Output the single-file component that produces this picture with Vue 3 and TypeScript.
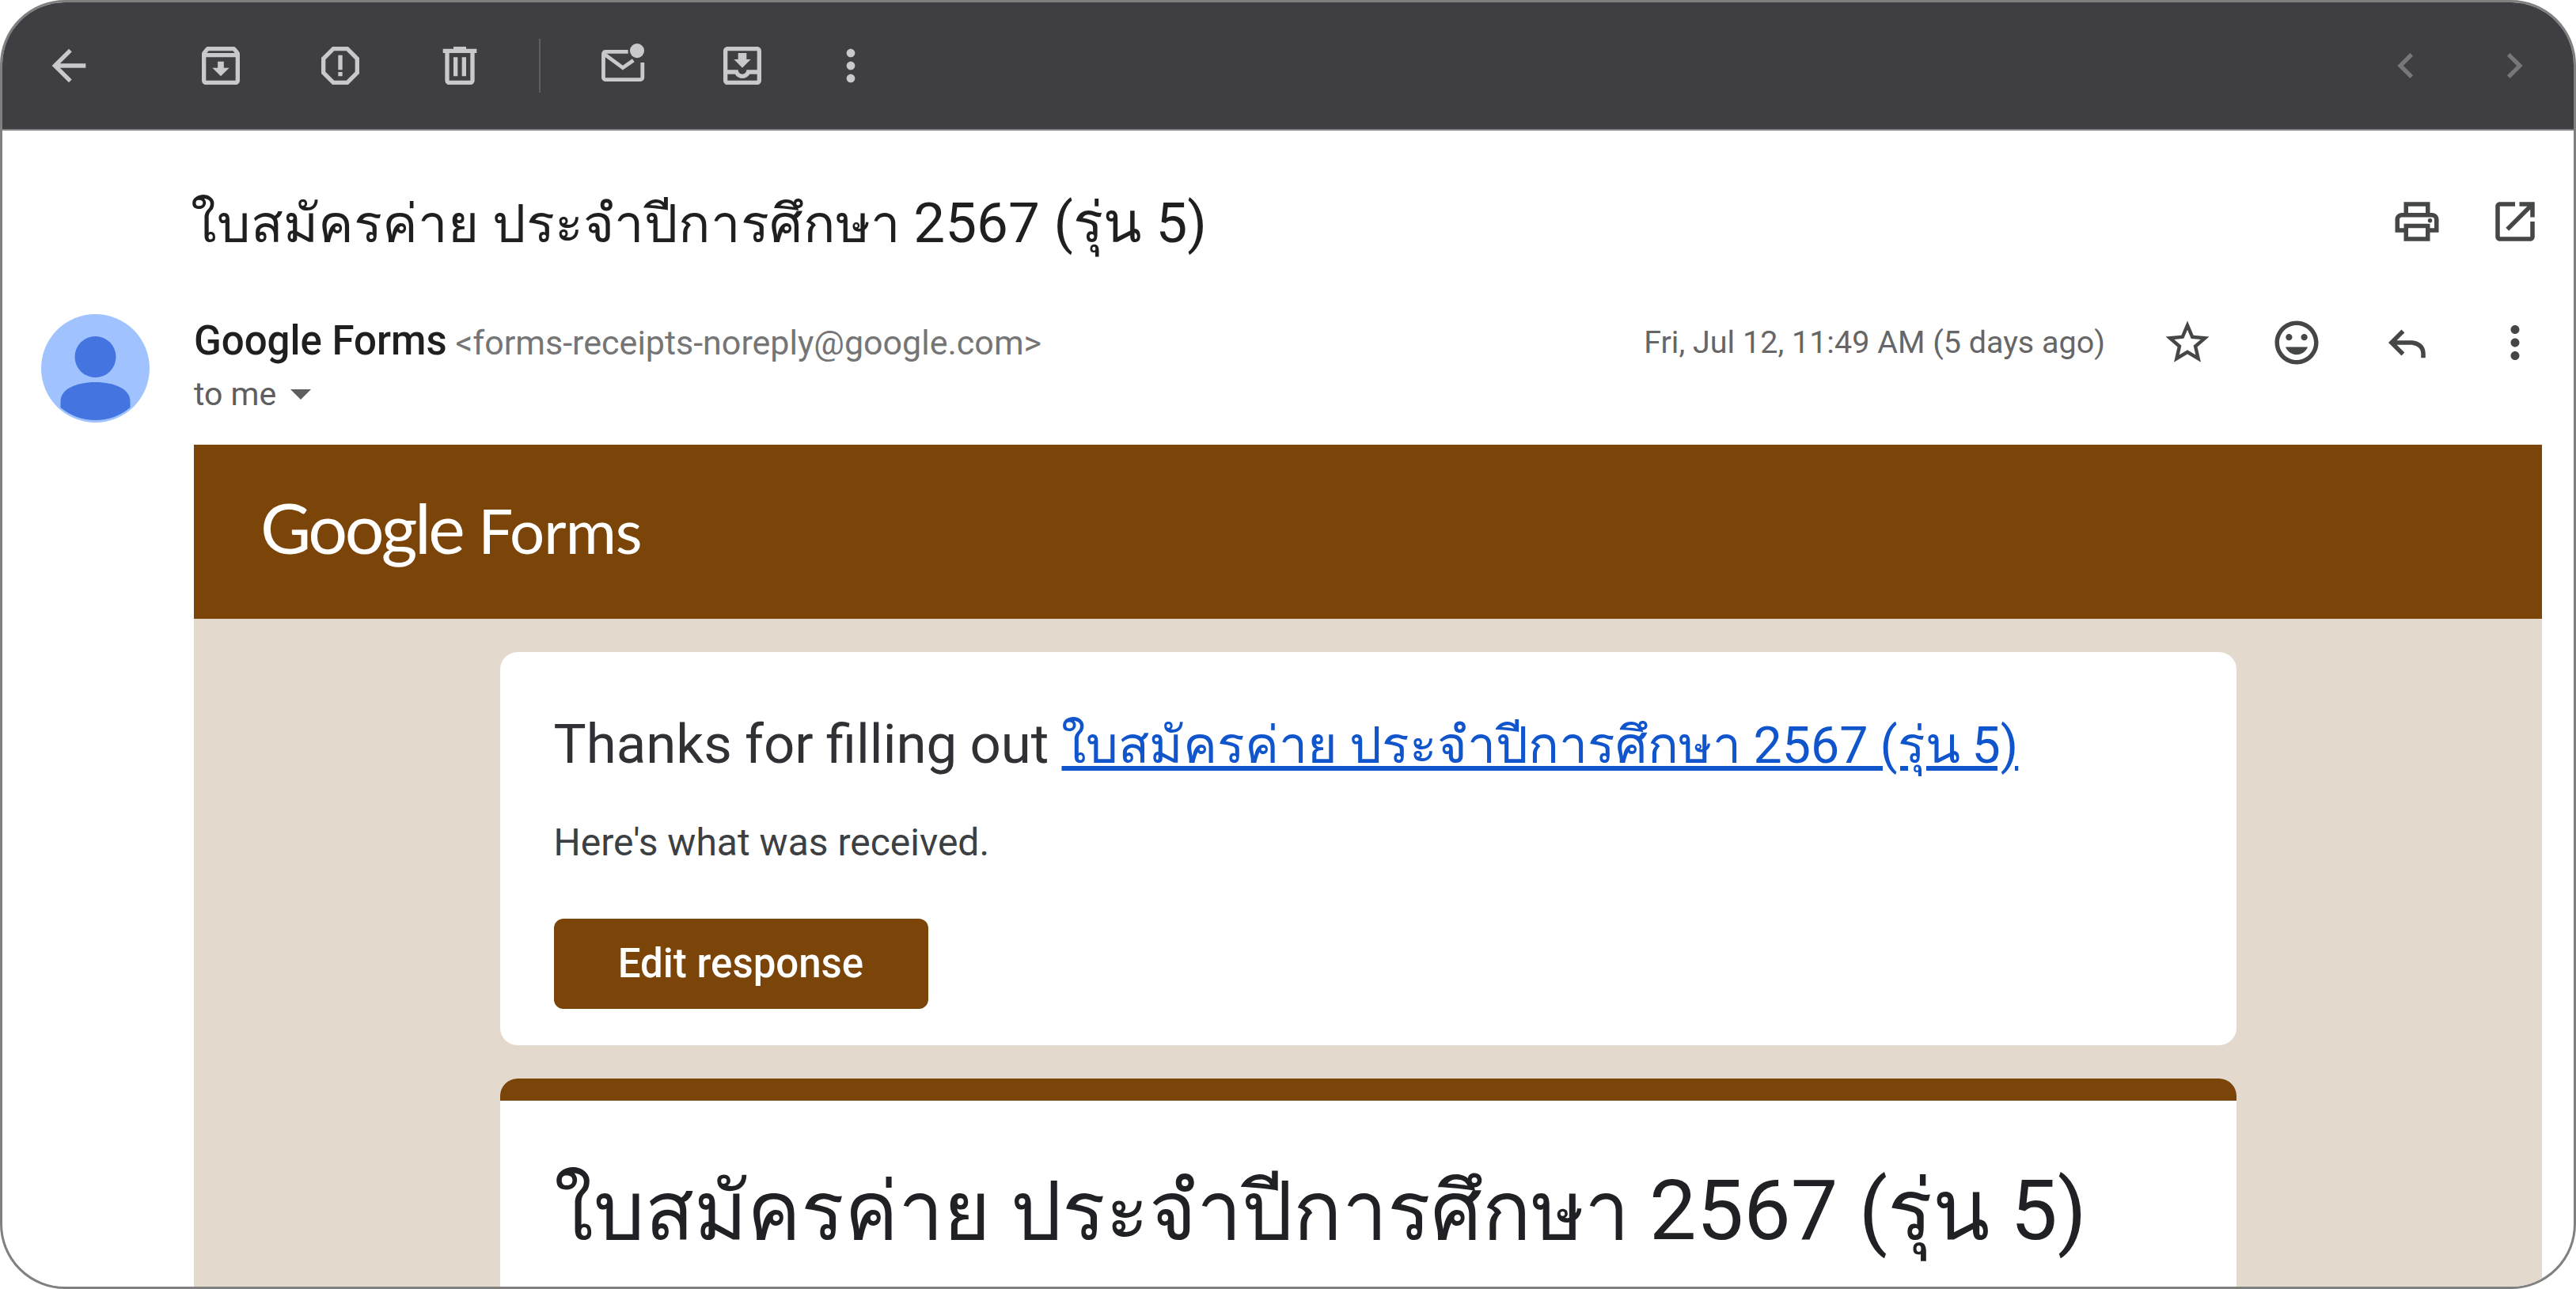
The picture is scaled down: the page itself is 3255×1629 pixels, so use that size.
<script setup lang="ts">
interface Icon { name: string; d: string }
const titleThai: string = 'ใบสมัครค่าย ประจำปีการศึกษา'
const titleNum: string = '2567 (รุ่น 5)'
const more = 'M12 8c1.1 0 2-.9 2-2s-.9-2-2-2-2 .9-2 2 .9 2 2 2zm0 2c-1.1 0-2 .9-2 2s.9 2 2 2 2-.9 2-2-.9-2-2-2zm0 6c-1.1 0-2 .9-2 2s.9 2 2 2 2-.9 2-2-.9-2-2-2z'
const group1: Icon[] = [
  { name: 'archive', d: 'M20.54 5.23l-1.39-1.68C18.88 3.21 18.47 3 18 3H6c-.47 0-.88.21-1.16.55L3.46 5.23C3.17 5.57 3 6.02 3 6.5V19c0 1.1.9 2 2 2h14c1.1 0 2-.9 2-2V6.5c0-.48-.17-.93-.46-1.27zM6.24 5h11.52l.83 1H5.42l.82-1zM5 19V8h14v11H5zm8.45-9h-2.9v3H8l4 4 4-4h-2.55z' },
  { name: 'report', d: 'M15.73 3H8.27L3 8.27v7.46L8.27 21h7.46L21 15.73V8.27L15.73 3zM19 14.9L14.9 19H9.1L5 14.9V9.1L9.1 5h5.8L19 9.1v5.8zM11 7h2v7h-2zM11 15h2v2h-2z' },
  { name: 'delete', d: 'M15 4V3H9v1H4v2h1v13c0 1.1.9 2 2 2h10c1.1 0 2-.9 2-2V6h1V4h-5zm2 15H7V6h10v13zM9 8h2v9H9zm4 0h2v9h-2z' },
]
const inbox = 'M19 3H5c-1.1 0-2 .9-2 2v14c0 1.1.9 2 2 2h14c1.1 0 2-.9 2-2V5c0-1.1-.9-2-2-2zm0 16H5v-3h3.56c.69 1.19 1.97 2 3.45 2s2.75-.81 3.45-2H19v3zm0-5h-4.99c0 1.1-.9 2-2 2s-2-.9-2-2H5V5h14v9zm-3-5h-2V6h-4v3H8l4 4 4-4z'
const prev = 'M15.41 7.41L14 6l-6 6 6 6 1.41-1.41L10.83 12z'
const next = 'M10 6L8.59 7.41 13.17 12l-4.58 4.59L10 18l6-6z'
const print = 'M19 8h-1V3H6v5H5c-1.66 0-3 1.34-3 3v6h4v4h12v-4h4v-6c0-1.66-1.34-3-3-3zM8 5h8v3H8V5zm8 12v2H8v-4h8v2zm2-2v-2H6v2H4v-4c0-.55.45-1 1-1h14c.55 0 1 .45 1 1v4h-2zM18 10.5a1 1 0 1 0 0 2 1 1 0 0 0 0-2z'
const openNew = 'M19 19H5V5h7V3H5c-1.11 0-2 .9-2 2v14c0 1.1.89 2 2 2h14c1.1 0 2-.9 2-2v-7h-2v7zM14 3v2h3.59l-9.83 9.83 1.41 1.41L19 6.41V10h2V3h-7z'
const star = 'M22 9.24l-7.19-.62L12 2 9.19 8.63 2 9.24l5.46 4.73L5.82 21 12 17.27 18.18 21l-1.63-7.03L22 9.24zM12 15.4l-3.76 2.27 1-4.28-3.32-2.88 4.38-.38L12 6.1l1.71 4.04 4.38.38-3.32 2.88 1 4.28L12 15.4z'
const smile = 'M11.99 2C6.47 2 2 6.48 2 12s4.47 10 9.99 10C17.52 22 22 17.52 22 12S17.52 2 11.99 2zM12 20c-4.42 0-8-3.58-8-8s3.58-8 8-8 8 3.58 8 8-3.58 8-8 8zM15.5 8a1.5 1.5 0 1 0 0 3 1.5 1.5 0 0 0 0-3zM8.5 8a1.5 1.5 0 1 0 0 3 1.5 1.5 0 0 0 0-3zM12 17.5c2.33 0 4.31-1.46 5.11-3.5H6.89c.8 2.04 2.78 3.5 5.11 3.5z'
const reply = 'M21 17v2h-2v-2c0-2.76-2.24-4-5-4H7.83l3.59 3.59L10 18l-6-6 6-6 1.41 1.41L7.83 11H14c3.87 0 7 2.13 7 6z'
</script>

<template>
  <div class="frame">
    <header class="toolbar">
      <svg class="ti back" viewBox="0 0 24 24"><path d="M20 11H7.83l5.59-5.59L12 4l-8 8 8 8 1.41-1.41L7.83 13H20v-2z" /></svg>
      <div class="tgroup first">
        <svg v-for="i in group1" :key="i.name" class="ti" viewBox="0 0 24 24"><path :d="i.d" /></svg>
      </div>
      <span class="divider"></span>
      <div class="tgroup second">
        <svg class="ti" viewBox="0 0 24 24">
          <path class="line" d="M14.500 5.400H3.800a1 1 0 0 0-1 1V17.600a1 1 0 0 0 1 1H20.300a1 1 0 0 0 1-1V10.500" />
          <path class="line" d="M3.200 6.500L12 13l5-3.500" />
          <circle cx="18.750" cy="4.900" r="3.400" />
        </svg>
        <svg class="ti" viewBox="0 0 24 24"><path :d="inbox" /></svg>
        <svg class="ti dots" viewBox="0 0 24 24"><path :d="more" /></svg>
      </div>
      <div class="pager">
        <svg class="ti dim" viewBox="0 0 24 24"><path :d="prev" /></svg>
        <svg class="ti dim" viewBox="0 0 24 24"><path :d="next" /></svg>
      </div>
    </header>

    <main class="mail">
      <div class="subject-row">
        <h1 class="subject">{{ titleThai }} <span class="num">{{ titleNum }}</span></h1>
        <div class="subject-actions">
          <svg class="ai" viewBox="0 0 24 24"><path :d="print" /></svg>
          <svg class="ai" viewBox="0 0 24 24"><path :d="openNew" /></svg>
        </div>
      </div>

      <div class="sender-row">
        <svg class="avatar" viewBox="0 0 137 137">
          <circle cx="68.500" cy="68.500" r="68.500" fill="#a0c3ff" />
          <circle cx="68.500" cy="54" r="26" fill="#4374e0" />
          <path d="M68.500 86c-25 0-44 9-44 24v8a68.500 68.500 0 0 0 88 0v-8c0-15-19-24-44-24z" fill="#4374e0" />
        </svg>
        <div class="who">
          <div class="from"><strong>Google Forms</strong> <span class="addr">&lt;forms-receipts-noreply@google.com&gt;</span></div>
          <div class="tome">to me <span class="caret"></span></div>
        </div>
        <div class="date">Fri, Jul 12, 11:49 AM (5 days ago)</div>
        <div class="sender-actions">
          <svg class="ai" viewBox="0 0 24 24"><path :d="star" /></svg>
          <svg class="ai" viewBox="0 0 24 24"><path :d="smile" /></svg>
          <svg class="ai" viewBox="0 0 24 24"><path :d="reply" /></svg>
          <svg class="ai" viewBox="0 0 24 24"><path :d="more" /></svg>
        </div>
      </div>

      <section class="message">
        <div class="banner"><span class="logo"><span class="g">Google</span><span class="f">Forms</span></span></div>
        <div class="canvas">
          <div class="card thanks">
            <p class="thanks-line">Thanks for filling out <a class="link">{{ titleThai }} {{ titleNum }}</a></p>
            <p class="received">Here's what was received.</p>
            <button class="edit" type="button">Edit response</button>
          </div>
          <div class="card form">
            <div class="form-bar"></div>
            <h2 class="form-title">{{ titleThai }} <span class="num">{{ titleNum }}</span></h2>
          </div>
        </div>
      </section>
    </main>
  </div>
</template>

<style>
html, body { margin: 0; background: #fff; }
</style>

<style scoped>
.frame {
  box-sizing: border-box;
  width: 3255px;
  height: 1629px;
  border: 3px solid #808080;
  border-radius: 82px;
  overflow: hidden;
  background: #fff;
  font-family: Roboto, "Noto Sans", sans-serif;
  display: flex;
  flex-direction: column;
}
.toolbar {
  flex: none;
  box-sizing: border-box;
  height: 162px;
  background: #3f3e43;
  border-bottom: 2px solid #808080;
  display: flex;
  align-items: center;
  padding-left: 52px;
}
.ti { width: 64px; height: 64px; fill: #c9c9cb; flex: none; }
.ti.dim { fill: #77767a; }
.ti .line { fill: none; stroke: #c9c9cb; stroke-width: 1.800; }
.tgroup { display: flex; align-items: center; }
.first { margin-left: 128px; gap: 87px; }
.divider { width: 2px; height: 68px; background: #5e5d61; margin-left: 68px; }
.second { margin-left: 72px; gap: 87px; }
.second .dots { margin-left: -14px; }
.pager { margin-left: auto; margin-right: 43px; display: flex; gap: 73px; }
.mail { flex: 1; min-height: 0; display: flex; flex-direction: column; }
.subject-row {
  flex: none;
  display: flex;
  align-items: center;
  height: 198px;
  box-sizing: border-box;
  padding: 32px 0 0 238px;
}
.subject {
  margin: 0;
  font-size: 67px;
  font-weight: 400;
  color: #1f1f1f;
  white-space: nowrap;
}
.subject .num { font-size: 71px; }
.subject-actions { margin-left: auto; margin-right: 41px; display: flex; gap: 58px; }
.ai { width: 66px; height: 66px; fill: #444746; flex: none; }
.sender-row {
  flex: none;
  height: 199px;
  box-sizing: border-box;
  display: flex;
  align-items: flex-start;
  padding: 34px 0 0 49px;
}
.avatar { width: 137px; height: 137px; flex: none; }
.who { margin-left: 56px; padding-top: 2px; }
.from { font-size: 43px; line-height: 64px; color: #757575; white-space: nowrap; }
.from strong { font-size: 51px; font-weight: 500; color: #1f1f1f; }
.tome { font-size: 41px; line-height: 50px; color: #5e5e5e; margin-top: 8px; display: flex; align-items: center; gap: 18px; }
.caret { width: 0; height: 0; border: 13px solid transparent; border-top: 13px solid #5e5e5e; border-bottom: 0; }
.date { margin-left: auto; padding-top: 4px; font-size: 39.5px; line-height: 64px; color: #666; white-space: nowrap; }
.sender-actions { margin-left: 71px; margin-right: 41px; margin-top: 3px; display: flex; gap: 72px; }
.message { flex: 1; min-height: 0; margin: 0 40px 0 242px; display: flex; flex-direction: column; overflow: hidden; }
.banner { flex: none; height: 220px; background: #7b4509; display: flex; align-items: center; padding: 0 0 12px 84px; box-sizing: border-box; }
.logo { display: flex; align-items: baseline; gap: 20px; font-family: Lato, sans-serif; color: #fff; font-weight: 400; }
.logo .g { font-size: 88px; letter-spacing: -3.500px; }
.logo .f { font-size: 78px; letter-spacing: -1px; }
.canvas { flex: 1; background: #e3d9cd; display: flex; flex-direction: column; align-items: center; gap: 42px; padding: 42px 0 0; }
.card { width: 2194px; background: #fff; box-sizing: border-box; border-radius: 22px; flex: none; }
.thanks { height: 497px; padding: 78px 68px 0; }
.thanks-line { margin: 0; font-size: 69px; line-height: 78px; color: #303134; white-space: nowrap; word-spacing: -1px; }
.link { color: #1155cc; text-decoration: underline; font-size: 64.5px; }
.received { margin: 55px 0 0; font-size: 48px; line-height: 58px; color: #3c4043; }
.edit {
  display: block;
  margin-top: 67px;
  width: 473px;
  height: 114px;
  border: 0;
  border-radius: 12px;
  background: #7b4509;
  color: #fff;
  font-family: Roboto, sans-serif;
  font-size: 51px;
  font-weight: 500;
  padding: 0 0 2px;
}
.form { height: 400px; overflow: hidden; }
.form-bar { height: 28px; background: #7b4509; }
.form-title { margin: 74px 68px 0; font-size: 102px; font-weight: 400; line-height: 130px; color: #202124; white-space: nowrap; }
.form-title .num { font-size: 106px; }
</style>
